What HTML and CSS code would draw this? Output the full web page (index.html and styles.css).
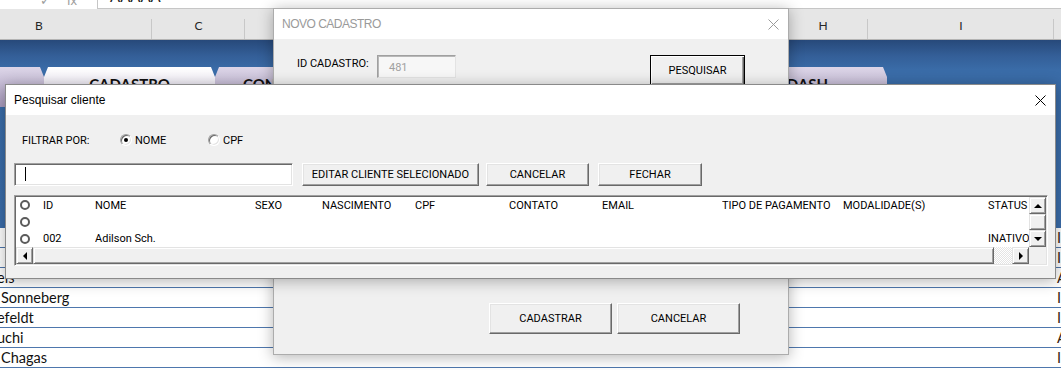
FILE: index.html
```html
<!DOCTYPE html>
<html lang="pt">
<head>
<meta charset="utf-8">
<title>Cadastro</title>
<link rel="stylesheet" href="styles.css">
</head>
<body>
<div class="sheet">
  <div class="fbar">
    <div class="fbar-tools"><span class="tool">✓</span><span class="tool">fx</span></div>
    <div class="fbar-input"><span class="fbar-text">AAAAA</span></div>
  </div>
  <div class="colhdr">
    <div class="col col-b">B</div>
    <div class="col col-c">C</div>
    <div class="col col-d"></div>
    <div class="col col-e"></div>
    <div class="col col-f"></div>
    <div class="col col-g"></div>
    <div class="col col-h">H</div>
    <div class="col col-i">I</div>
    <div class="col col-j">J</div>
  </div>
  <div class="banner">
    <div class="tabs">
      <div class="tab tab-first">MENU</div>
      <div class="tab tab-active">CADASTRO</div>
      <div class="tab tab-con">CONSULTA GERAL</div>
      <div class="tab"></div>
      <div class="tab tab-narrow"></div>
      <div class="tab tab-dash">DASH</div>
    </div>
  </div>
  <div class="rows">
    <div class="row"><div class="cell-b"></div><div class="cell-j">INATIVO</div></div>
    <div class="row"><div class="cell-b cut">.</div><div class="cell-j">INATIVO</div></div>
    <div class="row"><div class="cell-b cut">eis</div><div class="cell-j">ATIVO</div></div>
    <div class="row"><div class="cell-b">Sonneberg</div><div class="cell-j">INATIVO</div></div>
    <div class="row"><div class="cell-b cut">efeldt</div><div class="cell-j">INATIVO</div></div>
    <div class="row"><div class="cell-b cut">uchi</div><div class="cell-j">ATIVO</div></div>
    <div class="row"><div class="cell-b">Chagas</div><div class="cell-j">INATIVO</div></div>
    <div class="row"><div class="cell-b">Silva</div><div class="cell-j">ATIVO</div></div>
  </div>
</div>

<div class="dlg dlg-novo">
  <div class="dlg-title title-inactive">
    <span>NOVO CADASTRO</span>
    <svg class="close" width="11" height="11" viewBox="0 0 11 11"><path d="M0.5 0.5L10.5 10.5M10.5 0.5L0.5 10.5" stroke="#9a9a9a" stroke-width="1" fill="none"/></svg>
  </div>
  <div class="novo-body">
    <div class="id-row">
      <span class="lbl id-lbl">ID CADASTRO:</span>
      <div class="field field-id">481</div>
      <button class="btn btn-default">PESQUISAR</button>
    </div>
    <div class="novo-actions">
      <button class="btn btn-big">CADASTRAR</button>
      <button class="btn btn-big">CANCELAR</button>
    </div>
  </div>
</div>

<div class="dlg dlg-pesq">
  <div class="dlg-title">
    <span>Pesquisar cliente</span>
    <svg class="close" width="11" height="11" viewBox="0 0 11 11"><path d="M0.5 0.5L10.5 10.5M10.5 0.5L0.5 10.5" stroke="#000" stroke-width="1" fill="none"/></svg>
  </div>
  <div class="pesq-body">
    <div class="filter-row">
      <span class="lbl filter-lbl">FILTRAR POR:</span>
      <label class="opt opt-nome"><span class="radio checked"></span>NOME</label>
      <label class="opt"><span class="radio"></span>CPF</label>
    </div>
    <div class="search-row">
      <div class="field field-search"><span class="caret"></span></div>
      <button class="btn btn-edit">EDITAR CLIENTE SELECIONADO</button>
      <button class="btn btn-cancel">CANCELAR</button>
      <button class="btn btn-close">FECHAR</button>
    </div>
    <div class="listbox">
      <div class="lb-grid">
        <div class="lb-rows">
          <div class="lb-row">
            <span class="lb-radio"></span><span>ID</span><span>NOME</span><span>SEXO</span><span>NASCIMENTO</span><span>CPF</span><span>CONTATO</span><span>EMAIL</span><span>TIPO DE PAGAMENTO</span><span>MODALIDADE(S)</span><span>STATUS</span>
          </div>
          <div class="lb-row">
            <span class="lb-radio"></span><span></span><span></span><span></span><span></span><span></span><span></span><span></span><span></span><span></span><span></span>
          </div>
          <div class="lb-row">
            <span class="lb-radio"></span><span>002</span><span>Adilson Sch.</span><span></span><span></span><span></span><span></span><span></span><span></span><span></span><span>INATIVO</span>
          </div>
        </div>
        <div class="vscroll">
          <div class="sb-btn"><span class="arr arr-up"></span></div>
          <div class="sb-thumb"></div>
          <div class="sb-btn"><span class="arr arr-down"></span></div>
        </div>
        <div class="hscroll">
          <div class="sb-btn"><span class="arr arr-left"></span></div>
          <div class="sb-thumb hthumb"></div>
          <div class="sb-track"></div>
          <div class="sb-btn"><span class="arr arr-right"></span></div>
        </div>
        <div class="sb-corner"></div>
      </div>
    </div>
  </div>
</div>
</body>
</html>
```

FILE: styles.css
```css
* { box-sizing: border-box; }
html, body { margin: 0; padding: 0; }
body {
  width: 1061px;
  height: 370px;
  overflow: hidden;
  position: relative;
  background: #fff;
  font-family: "Liberation Sans", Arial, sans-serif;
}

/* ---------- spreadsheet ---------- */
.sheet { display: flex; flex-direction: column; width: 1061px; overflow: hidden; }

.fbar {
  height: 9px;
  display: flex;
  background: #fff;
  overflow: hidden;
}
.fbar-tools {
  width: 97px;
  display: flex;
  gap: 16px;
  padding-left: 40px;
  color: #9c9c9c;
  font-size: 13px;
  line-height: 13px;
  margin-top: -6px;
}
.fbar-input {
  flex: 1;
  border-left: 1px solid #c6c6c6;
  border-bottom: 1px solid #c6c6c6;
  padding-left: 12px;
  font-family: "Lato", sans-serif;
  font-size: 15px;
  line-height: 15px;
}
.fbar-text { display: block; margin-top: -11px; color: #222; }

.colhdr {
  height: 31px;
  display: flex;
  margin-left: -74px;
  background: #e6e6e6;
  border-bottom: 1px solid #b4b4b4;
  font-family: "Lato", sans-serif;
  font-size: 12px;
  color: #262626;
}
.col {
  flex: none;
  display: flex;
  align-items: center;
  justify-content: center;
  padding-top: 2px;
  background: linear-gradient(#c8c8c8, #c8c8c8) no-repeat right bottom / 1px 20px;
}
.col-b { width: 226px; }
.col-c { width: 93px; }
.col-d, .col-e, .col-f, .col-g { width: 133.25px; }
.col-h { width: 90px; }
.col-i { width: 186px; }
.col-j { width: 120px; }

.banner {
  height: 188px;
  background: linear-gradient(180deg, #27497a 0px, #345f98 16px, #3a6ca8 30px, #3b6daa 100%);
}
.tabs {
  display: flex;
  margin-top: 27px;
  margin-left: -127px;
}
.tab {
  width: 171px;
  height: 40px;
  flex: none;
  clip-path: polygon(4px 0, calc(100% - 4px) 0, 100% 10px, 100% 100%, 0 100%, 0 10px);
  background: linear-gradient(180deg, #ddd6e8 0%, #c6bcd6 45%, #a99bbd 100%);
  font-family: "Lato", sans-serif;
  font-weight: 700;
  font-size: 15px;
  color: #111;
  text-align: center;
  white-space: nowrap;
  padding-top: 8px;
}
.tab-active { background: linear-gradient(180deg, #ffffff 0%, #eeeaf4 45%, #d8d0e4 100%); }
.tab-con { text-align: left; padding-left: 28px; }
.tab-narrow { width: 159px; }
.tab-dash { padding-left: 12px; }

.rows { display: flex; flex-direction: column; }
.row {
  height: 20px;
  display: flex;
  border-bottom: 1px solid #4e77ad;
  font-family: "Lato", sans-serif;
  font-size: 14.5px;
  line-height: 19px;
  color: #111;
}
.cell-b { width: 1054px; flex: none; padding-left: 1px; white-space: nowrap; }
.cell-b.cut { text-indent: -4px; }
.cell-j { width: 100px; flex: none; padding-left: 3px; white-space: nowrap; color: #3a2410; }

/* ---------- dialogs ---------- */
.dlg {
  position: absolute;
  display: flex;
  flex-direction: column;
  background: #f0f0f0;
  font-family: "Roboto", "Liberation Sans", sans-serif;
  font-size: 11px;
  color: #000;
}
.dlg-title {
  height: 30px;
  flex: none;
  background: #fff;
  display: flex;
  align-items: center;
  justify-content: space-between;
  padding: 0 9px 0 8px;
  font-family: "Liberation Sans", Arial, sans-serif;
  font-size: 12px;
}
.title-inactive { color: #9a9a9a; letter-spacing: -0.5px; }

.dlg-novo {
  left: 273px;
  top: 8px;
  width: 516px;
  height: 347px;
  border: 1px solid #acacac;
  box-shadow: 0 2px 14px rgba(0, 0, 0, 0.3);
}
.novo-body {
  flex: 1;
  display: flex;
  flex-direction: column;
  padding: 16px 43px 20px 23px;
}
.id-row { display: flex; align-items: flex-start; }
.id-lbl { width: 80px; padding-top: 2px; }
.field {
  background: #fff;
  border: 1px solid;
  border-color: #a0a0a0 #fff #fff #a0a0a0;
  box-shadow: inset 1px 1px #696969, inset -1px -1px #e3e3e3;
}
.field-id {
  width: 79px;
  height: 23px;
  background: #f7f7f7;
  color: #a0a0a0;
  padding: 5px 0 0 11px;
  border-color: #a0a0a0 #e3e3e3 #e3e3e3 #a0a0a0;
  box-shadow: inset 1px 1px #b8b8b8;
}
.btn {
  font-family: "Roboto", "Liberation Sans", sans-serif;
  font-size: 11px;
  color: #000;
  background: #f0f0f0;
  border: 1px solid;
  border-color: #fff #696969 #696969 #fff;
  box-shadow: inset -1px -1px #a0a0a0, inset 1px 1px #e3e3e3;
  padding: 0;
  margin: 0;
  height: 23px;
}
.btn-default {
  margin-left: auto;
  width: 95px;
  height: 31px;
  border: 1px solid #000;
  box-shadow: inset 1px 1px #fff, inset -1px -1px #696969, inset -2px -2px #a0a0a0;
}
.novo-actions {
  margin-top: auto;
  display: flex;
  justify-content: flex-end;
  gap: 5px;
  padding-right: 5px;
}
.btn-big { width: 123px; height: 31px; }

.dlg-pesq {
  left: 5px;
  top: 84px;
  width: 1051px;
  height: 195px;
  border: 1px solid #8a8a8a;
  box-shadow: 0 2px 14px rgba(0, 0, 0, 0.3);
}
.pesq-body {
  flex: 1;
  padding: 17px 7px 0 8px;
  display: flex;
  flex-direction: column;
}
.filter-row { display: flex; align-items: center; height: 16px; padding-left: 8px; }
.filter-lbl { width: 98px; }
.opt { display: flex; align-items: center; gap: 3px; }
.opt-nome { width: 88px; }
.radio {
  width: 12px;
  height: 12px;
  border-radius: 50%;
  background: #fff;
  border: 1px solid;
  border-color: #a0a0a0 #fff #fff #a0a0a0;
  box-shadow: inset 1px 1px #696969, inset -1px -1px #e3e3e3;
  display: flex;
  align-items: center;
  justify-content: center;
}
.radio.checked::after {
  content: "";
  width: 4px;
  height: 4px;
  border-radius: 50%;
  background: #000;
}

.search-row { display: flex; margin-top: 15px; height: 23px; }
.field-search { width: 279px; height: 23px; padding: 3px 0 0 10px; }
.caret { display: block; width: 1px; height: 14px; background: #000; }
.btn-edit { width: 177px; margin-left: 9px; }
.btn-cancel { width: 103px; margin-left: 7px; }
.btn-close { width: 104px; margin-left: 9px; }

.listbox {
  margin-top: 9px;
  width: 1034px;
  height: 71px;
  background: #fff;
  border: 1px solid;
  border-color: #a0a0a0 #fff #fff #a0a0a0;
  box-shadow: inset 1px 1px #696969, inset -1px -1px #e3e3e3;
  padding: 1px;
}
.lb-grid {
  height: 100%;
  display: grid;
  grid-template-columns: 1fr 17px;
  grid-template-rows: 1fr 17px;
}
.lb-rows { display: grid; grid-template-rows: repeat(3, 1fr); overflow: hidden; }
.lb-row {
  display: grid;
  grid-template-columns: 27px 52px 160px 67px 93px 94px 93px 120px 121px 145px 41px;
  align-items: center;
  white-space: nowrap;
}
.lb-row span { overflow: hidden; }
.lb-radio {
  width: 10px;
  height: 10px;
  margin-left: 4px;
  border-radius: 50%;
  border: 2px solid #5b5b5b;
  background: #fff;
}

.vscroll { display: grid; grid-template-rows: 17px 1fr 17px; }
.hscroll { display: flex; }
.sb-btn {
  width: 17px;
  height: 17px;
  flex: none;
  background: #f0f0f0;
  border: 1px solid;
  border-color: #e3e3e3 #696969 #696969 #e3e3e3;
  box-shadow: inset 1px 1px #fff, inset -1px -1px #a0a0a0;
  display: flex;
  align-items: center;
  justify-content: center;
}
.sb-thumb {
  background: #f0f0f0;
  border: 1px solid;
  border-color: #e3e3e3 #696969 #696969 #e3e3e3;
  box-shadow: inset 1px 1px #fff, inset -1px -1px #a0a0a0;
}
.hthumb { flex: 1; }
.sb-track {
  width: 18px;
  background: repeating-conic-gradient(#ffffff 0 25%, #e4e4e4 0 50%) 0 0 / 2px 2px;
}
.sb-corner { background: #f0f0f0; }
.arr { width: 0; height: 0; border: 4px solid transparent; }
.arr-up { border-bottom-color: #000; border-top-width: 0; }
.arr-down { border-top-color: #000; border-bottom-width: 0; }
.arr-left { border-right-color: #000; border-left-width: 0; }
.arr-right { border-left-color: #000; border-right-width: 0; }
```
